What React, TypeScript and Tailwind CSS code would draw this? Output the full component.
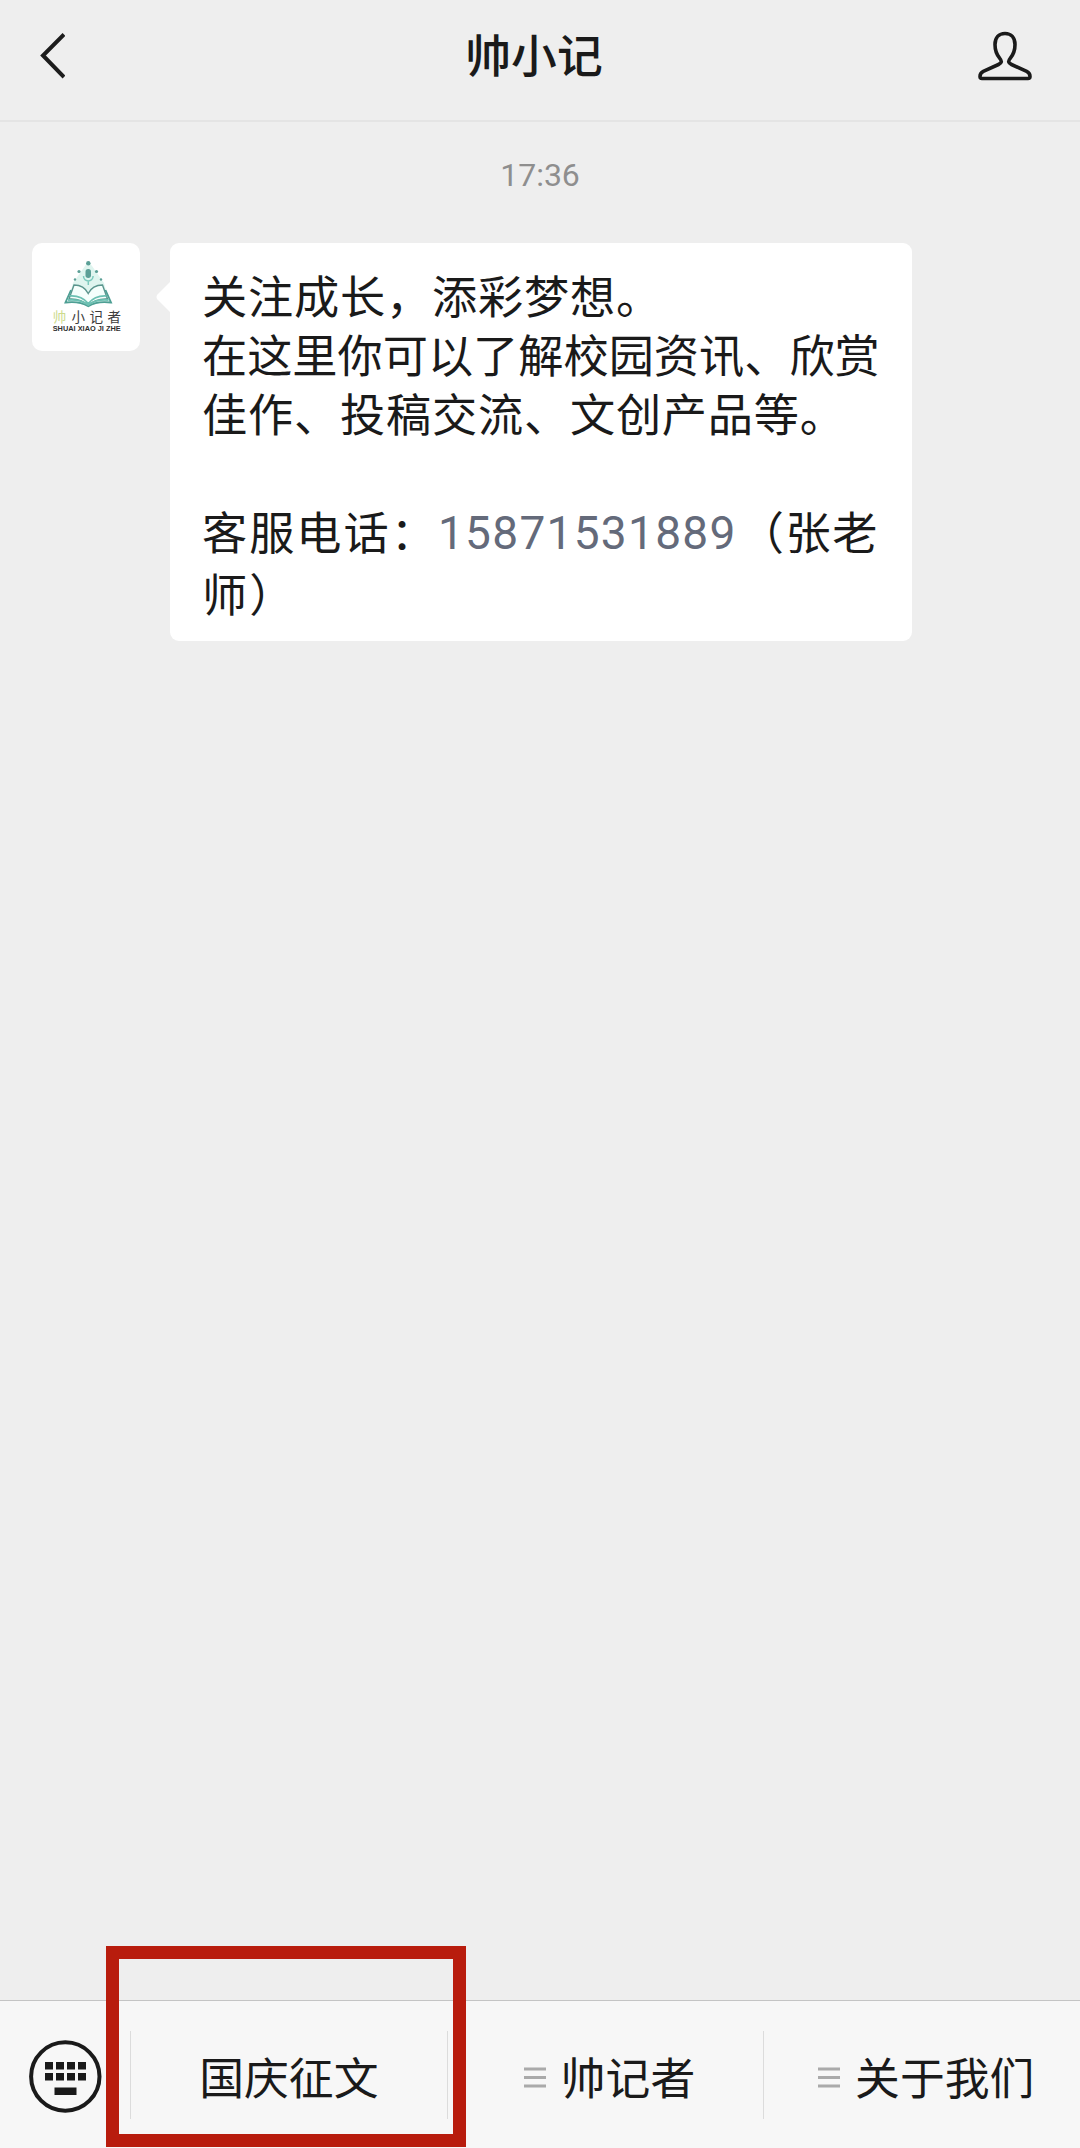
import React from 'react';

const BackIcon = () => (
  <svg width="26" height="48" viewBox="0 0 26 48" fill="none">
    <path d="M25 3.500 4 24.500 25 46" stroke="#1c1c1c" strokeWidth="4" />
  </svg>
);

const ProfileIcon = () => (
  <svg width="54" height="52" viewBox="0 0 54 52" fill="none">
    <path
      d="M27 2.5C20.8 2.5 17 7 17 13.5c0 6.500 1.600 10 4.600 13.600c2.600 3.200 2.200 4.900-1.100 6.400L5.300 40.300C2.800 41.500 2 43.500 2 45.500c0 1.300.7 2 2 2h46c1.300 0 2-.7 2-2 0-2-.8-4-3.300-5.200L33.500 33.500c-3.300-1.500-3.700-3.200-1.100-6.400C35.400 23.500 37 20 37 13.500 37 7 33.200 2.500 27 2.500Z"
      stroke="#1a1a1a"
      strokeWidth="3.6"
      strokeLinejoin="round"
    />
  </svg>
);

const KeyboardIcon = () => (
  <svg width="74" height="74" viewBox="0 0 74 74">
    <circle cx="37.3" cy="36.5" r="34.2" fill="none" stroke="#1a1a1a" strokeWidth="4" />
    {[17, 28, 39, 50].map(x => (
      <g key={x} fill="#1a1a1a">
        <rect x={x} y="22" width="8" height="7.5" />
        <rect x={x} y="33" width="8" height="7.5" />
      </g>
    ))}
    <rect x="26.5" y="47.5" width="22" height="7.5" fill="#1a1a1a" />
  </svg>
);

const MenuLines = () => (
  <svg width="22" height="21" viewBox="0 0 22 21" stroke="#aaaaaa" strokeWidth="3">
    <path d="M0 2h22M0 10.5h22M0 19h22" />
  </svg>
);

const Avatar = () => (
  <svg width="108" height="108" viewBox="0 0 108 108" fill="none">
    <path d="M56.5 18 41 40l-5 18 20 5 21-5-5-18Z" fill="#dff5ef" />
    <g fill="#5b9f96">
      <circle cx="56.3" cy="20.3" r="2.2" />
      <circle cx="47" cy="28.5" r="1.6" />
      <circle cx="64.5" cy="28.5" r="1.6" />
      <circle cx="43" cy="36.5" r="1.2" />
      <circle cx="69" cy="36.5" r="1.2" />
      <rect x="53.5" y="26" width="5.5" height="9" rx="2.7" />
    </g>
    <path d="M51.5 33c0 6.5 9.6 6.5 9.6 0M56.3 38v4" stroke="#7ccabd" strokeWidth="1.5" />
    <path d="M42 42c6 0 11.5 3 14.2 8.5C59 45 64.5 42 70.5 42l5 14c-8-.5-14 1.5-19.2 6.5C51 57.5 44.500 55.500 37 56Z" fill="#f5fffc" stroke="#5a958d" strokeWidth="1.4" />
    <path d="m39 47-5.500 12.500c10-1.300 17 .2 22.800 3.800 5.500-3.600 12.700-5.100 22.700-3.800L73.500 47" stroke="#4e9f94" strokeWidth="1.8" />
    <path d="M38 53c8-.5 14 2.500 18.300 7.500C60.500 55.500 66.500 52.500 74.500 53M36 57c8-.8 15 1 20.300 5 5.200-4 12.200-5.800 20.200-5" stroke="#6cc0b2" strokeWidth="1.8" />
    <g className="font-['Noto_Sans_CJK_SC',sans-serif] text-[13.5px]">
      <text x="20.7" y="79" fill="#cddb8d">帅</text>
      <text x="39.5" y="79" fill="#3d3d3d">小</text>
      <text x="57.5" y="79" fill="#3d3d3d">记</text>
      <text x="75.5" y="79" fill="#3d3d3d">者</text>
    </g>
    <text
      x="20.7"
      y="88"
      textLength="68"
      lengthAdjust="spacingAndGlyphs"
      fill="#2f2f2f"
      className="font-['Liberation_Sans',sans-serif] text-[7.5px] font-bold"
    >
      SHUAI XIAO JI ZHE
    </text>
  </svg>
);

interface MenuItemProps {
  label: string;
  hasSubmenu?: boolean;
}

const MenuItem: React.FC<MenuItemProps> = ({ label, hasSubmenu }) => (
  <button className="flex-1 h-full flex items-center justify-center gap-[15px] pt-[2px]">
    {hasSubmenu && (
      <span className="pl-[8px] pt-[4px]">
        <MenuLines />
      </span>
    )}
    <span className="text-[44.8px] leading-[60px] whitespace-nowrap">{label}</span>
  </button>
);

const Divider = () => <div className="w-px h-[88px] shrink-0 bg-[#dcdcdc]" />;

export default function App() {
  return (
    <div className="w-[1080px] h-[2148px] flex flex-col overflow-hidden bg-[#eeeeee] text-[#1a1a1a] font-['Noto_Sans_CJK_SC',sans-serif]">
      <header className="h-[122px] shrink-0 border-b-2 border-[#e4e4e4] pl-[39px] pr-[48px] pb-[10px] grid grid-cols-[54px_1fr_54px] items-center">
        <BackIcon />
        <h1 className="text-center text-[45.8px] leading-[60px] font-medium pr-[3px] pb-[5px]">帅小记</h1>
        <div className="pt-[3px]">
          <ProfileIcon />
        </div>
      </header>

      <main className="flex-1 flex flex-col">
        <time className="mt-[34px] text-center text-[32px] leading-[38px] text-[#8e8e8e] font-['Roboto',sans-serif]">17:36</time>

        <div className="mt-[49px] pl-[32px] flex items-start">
          <div className="size-[108px] rounded-[10px] bg-white overflow-hidden">
            <Avatar />
          </div>
          <div className="relative ml-[30px] w-[742px] h-[398px] rounded-[9px] bg-white pl-[32px] pt-[22px] text-[45.2px] leading-[59px] whitespace-nowrap">
            <svg className="absolute left-[-14px] top-[38px]" width="15" height="32" viewBox="0 0 15 32">
              <path d="M15 0 1.500 13.500q-2 2.500 0 5L15 32Z" fill="#ffffff" />
            </svg>
            <p className="tracking-[0.8px]">关注成长，添彩梦想。</p>
            <p>在这里你可以了解校园资讯、欣赏</p>
            <p className="tracking-[0.8px]">佳作、投稿交流、文创产品等。</p>
            <p className="h-[59px]" />
            <p className="flex">
              <span className="tracking-[2px]">客服电话：</span>
              <span className="mt-[3px] font-['Roboto',sans-serif] text-[46px] tracking-[1.3px] text-[#646a7a]">15871531889</span>
              <span className="ml-[2px] tracking-[1.6px]">（张老</span>
            </p>
            <p className="tracking-[2px]">师）</p>
          </div>
        </div>
      </main>

      <footer className="relative h-[148px] shrink-0 border-t border-[#c4c4c4] bg-[#f7f7f7] flex items-center">
        <div className="w-[130px] shrink-0 pl-[28px] pt-[4px]">
          <KeyboardIcon />
        </div>
        <Divider />
        <MenuItem label="国庆征文" />
        <Divider />
        <MenuItem label="帅记者" hasSubmenu />
        <Divider />
        <MenuItem label="关于我们" hasSubmenu />
        <div className="absolute left-[106px] top-[-55px] w-[360px] h-[201px] border-[13px] border-[#b81c0d]" />
      </footer>
    </div>
  );
}
